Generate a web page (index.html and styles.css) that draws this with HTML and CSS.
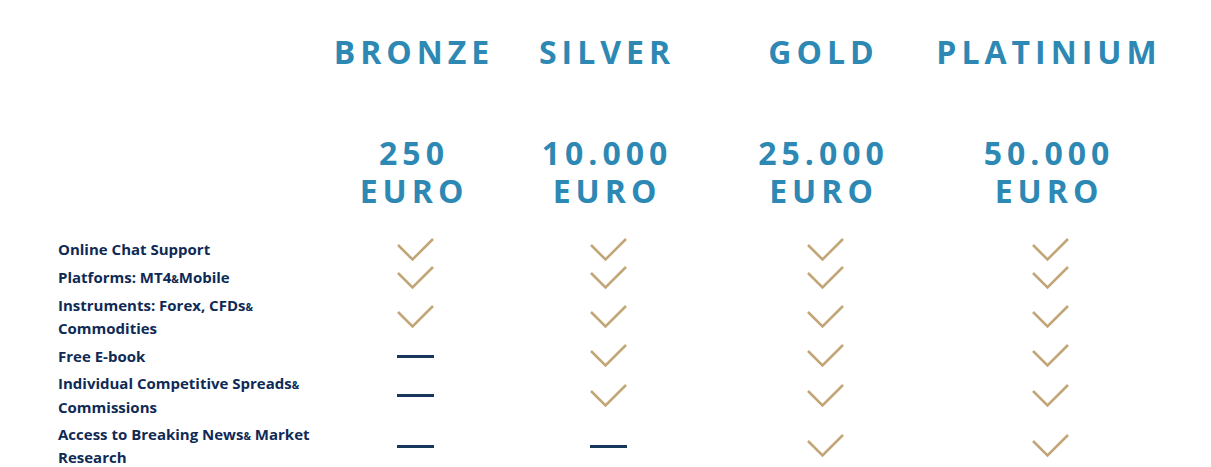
FILE: index.html
```html
<!DOCTYPE html>
<html>
<head>
<meta charset="utf-8">
<link rel="stylesheet" href="styles.css">
</head>
<body>
<div class="pricing">
  <div class="row head">
    <div></div>
    <div class="cell">BRONZE</div>
    <div class="cell">SILVER</div>
    <div class="cell">GOLD</div>
    <div class="cell">PLATINIUM</div>
  </div>
  <div class="row price">
    <div></div>
    <div class="cell">250<br>EURO</div>
    <div class="cell">10.000<br>EURO</div>
    <div class="cell">25.000<br>EURO</div>
    <div class="cell">50.000<br>EURO</div>
  </div>
  <div class="features">
    <div class="row feat">
      <div class="label">Online Chat Support</div>
      <div class="cell"><svg class="check" viewBox="0 0 37 24"><polyline points="1,7 15.5,21.5 36,1"/></svg></div>
      <div class="cell"><svg class="check" viewBox="0 0 37 24"><polyline points="1,7 15.5,21.5 36,1"/></svg></div>
      <div class="cell"><svg class="check" viewBox="0 0 37 24"><polyline points="1,7 15.5,21.5 36,1"/></svg></div>
      <div class="cell"><svg class="check" viewBox="0 0 37 24"><polyline points="1,7 15.5,21.5 36,1"/></svg></div>
    </div>
    <div class="row feat">
      <div class="label">Platforms: MT4<small>&amp;</small>Mobile</div>
      <div class="cell"><svg class="check" viewBox="0 0 37 24"><polyline points="1,7 15.5,21.5 36,1"/></svg></div>
      <div class="cell"><svg class="check" viewBox="0 0 37 24"><polyline points="1,7 15.5,21.5 36,1"/></svg></div>
      <div class="cell"><svg class="check" viewBox="0 0 37 24"><polyline points="1,7 15.5,21.5 36,1"/></svg></div>
      <div class="cell"><svg class="check" viewBox="0 0 37 24"><polyline points="1,7 15.5,21.5 36,1"/></svg></div>
    </div>
    <div class="row feat">
      <div class="label">Instruments: Forex, CFDs<small>&amp;</small> Commodities</div>
      <div class="cell"><svg class="check" viewBox="0 0 37 24"><polyline points="1,7 15.5,21.5 36,1"/></svg></div>
      <div class="cell"><svg class="check" viewBox="0 0 37 24"><polyline points="1,7 15.5,21.5 36,1"/></svg></div>
      <div class="cell"><svg class="check" viewBox="0 0 37 24"><polyline points="1,7 15.5,21.5 36,1"/></svg></div>
      <div class="cell"><svg class="check" viewBox="0 0 37 24"><polyline points="1,7 15.5,21.5 36,1"/></svg></div>
    </div>
    <div class="row feat">
      <div class="label">Free E-book</div>
      <div class="cell"><span class="dash"></span></div>
      <div class="cell"><svg class="check" viewBox="0 0 37 24"><polyline points="1,7 15.5,21.5 36,1"/></svg></div>
      <div class="cell"><svg class="check" viewBox="0 0 37 24"><polyline points="1,7 15.5,21.5 36,1"/></svg></div>
      <div class="cell"><svg class="check" viewBox="0 0 37 24"><polyline points="1,7 15.5,21.5 36,1"/></svg></div>
    </div>
    <div class="row feat">
      <div class="label">Individual Competitive Spreads<small>&amp;</small> Commissions</div>
      <div class="cell"><span class="dash"></span></div>
      <div class="cell"><svg class="check" viewBox="0 0 37 24"><polyline points="1,7 15.5,21.5 36,1"/></svg></div>
      <div class="cell"><svg class="check" viewBox="0 0 37 24"><polyline points="1,7 15.5,21.5 36,1"/></svg></div>
      <div class="cell"><svg class="check" viewBox="0 0 37 24"><polyline points="1,7 15.5,21.5 36,1"/></svg></div>
    </div>
    <div class="row feat">
      <div class="label">Access to Breaking News<small>&amp;</small> Market Research</div>
      <div class="cell"><span class="dash"></span></div>
      <div class="cell"><span class="dash"></span></div>
      <div class="cell"><svg class="check" viewBox="0 0 37 24"><polyline points="1,7 15.5,21.5 36,1"/></svg></div>
      <div class="cell"><svg class="check" viewBox="0 0 37 24"><polyline points="1,7 15.5,21.5 36,1"/></svg></div>
    </div>
  </div>
</div>
</body>
</html>
```
FILE: styles.css
```css
html, body {
  margin: 0;
  padding: 0;
  background: #ffffff;
}

.pricing {
  padding: 31.6px 0 0 58px;
  font-family: "Open Sans", "Noto Sans", sans-serif;
}

.row {
  display: grid;
  grid-template-columns: 261px 193px 193px 240px 211px;
}

.cell {
  display: flex;
  justify-content: center;
  align-items: center;
  text-align: center;
}

.head .cell {
  font-size: 32px;
  font-weight: 700;
  line-height: 40px;
  letter-spacing: 5px;
  color: #2d89b4;
  white-space: nowrap;
  padding-right: 3px;
}

.price {
  margin-top: 62.7px;
}

.price .cell {
  font-size: 32px;
  font-weight: 700;
  line-height: 38px;
  letter-spacing: 5px;
  color: #2d89b4;
  padding-right: 3px;
}

.features {
  margin-top: 27.6px;
  display: flex;
  flex-direction: column;
  gap: 3.9px;
}

.feat {
  align-items: center;
}

.label {
  font-size: 15px;
  font-weight: 700;
  line-height: 23.4px;
  color: #0f2a55;
}

.label small {
  font-size: 10px;
  line-height: 0;
}

.check {
  width: 37px;
  height: 24px;
  display: block;
  fill: none;
  stroke: #c3a677;
  stroke-width: 2.6;
}

.dash {
  display: block;
  width: 37px;
  height: 3px;
  background: #17375b;
}
```
